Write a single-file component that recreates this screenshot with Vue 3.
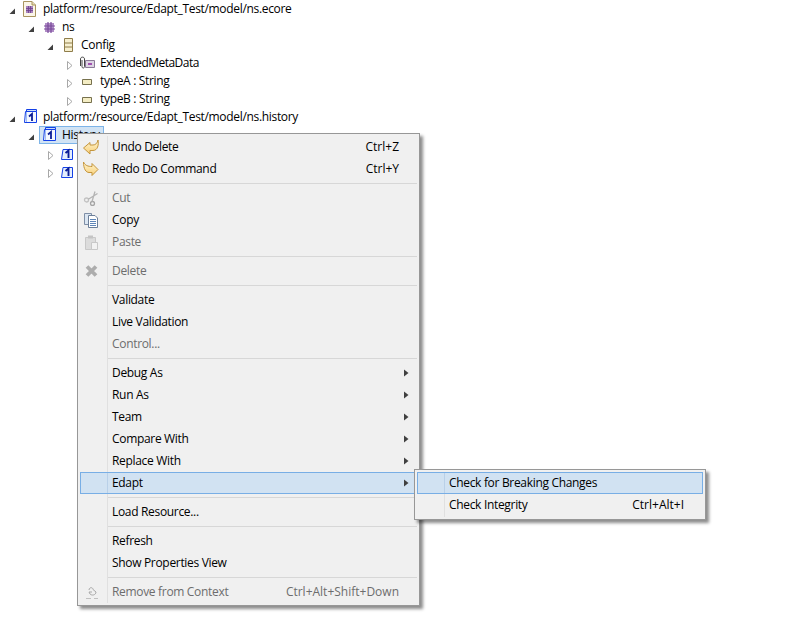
<script setup>
const tree = [
  { level: 0, open: true, icon: 'file', text: 'platform:/resource/Edapt_Test/model/ns.ecore' },
  { level: 1, open: true, icon: 'pkg', text: 'ns' },
  { level: 2, open: true, icon: 'cls', text: 'Config' },
  { level: 3, open: false, icon: 'anno', text: 'ExtendedMetaData', tight: true },
  { level: 3, open: false, icon: 'attr', text: 'typeA : String' },
  { level: 3, open: false, icon: 'attr', text: 'typeB : String' },
  { level: 0, open: true, icon: 'hist', text: 'platform:/resource/Edapt_Test/model/ns.history' },
  { level: 1, open: true, icon: 'hist', text: 'History', selected: true },
  { level: 2, open: false, icon: 'rel', text: '' },
  { level: 2, open: false, icon: 'rel', text: '' }
]
const menu = [
  [{ t: 'Undo Delete', k: 'Ctrl+Z', i: 'undo' }, { t: 'Redo Do Command', k: 'Ctrl+Y', i: 'redo' }],
  [{ t: 'Cut', d: 1, i: 'cut' }, { t: 'Copy', i: 'copy' }, { t: 'Paste', d: 1, i: 'paste' }],
  [{ t: 'Delete', d: 1, i: 'del' }],
  [{ t: 'Validate' }, { t: 'Live Validation' }, { t: 'Control...', d: 1 }],
  [{ t: 'Debug As', s: 1 }, { t: 'Run As', s: 1 }, { t: 'Team', s: 1 }, { t: 'Compare With', s: 1 }, { t: 'Replace With', s: 1 }, { t: 'Edapt', s: 1, h: 1 }],
  [{ t: 'Load Resource...' }],
  [{ t: 'Refresh' }, { t: 'Show Properties View' }],
  [{ t: 'Remove from Context', k: 'Ctrl+Alt+Shift+Down', d: 1, i: 'ctx' }]
]
</script>

<template>
  <div class="page">
    <div class="tree">
      <div v-for="(r, n) in tree" :key="n" class="row" :class="'lv' + r.level">
        <svg class="tw" width="9" height="9" viewBox="0 0 9 9">
          <path v-if="r.open" d="M7 1.5V7H1.5Z" fill="#404040" />
          <path v-else d="M2.5 .5L7 4.5L2.5 8.5Z" fill="#fff" stroke="#a8a8a8" />
        </svg>
        <div class="node" :class="{ sel: r.selected }">
          <svg class="ic" width="16" height="16" viewBox="0 0 16 16">
            <template v-if="r.icon === 'file'">
              <path d="M1.5 .5H10L13.5 4V15.5H1.5Z" fill="#fbf6e8" stroke="#a8945f" />
              <path d="M10 .5V4H13.5" fill="#e8dcb8" stroke="#a8945f" />
              <path d="M4 5H11V12H4Z" fill="#a884bd" />
              <path d="M4 7.5H11M4 9.5H11M6.5 5V12M8.5 5V12" stroke="#6c3f8a" stroke-width=".8" />
            </template>
            <template v-else-if="r.icon === 'pkg'">
              <path d="M4 4H13V13H4Z" fill="#b08cc6" />
              <path d="M3 7H14M3 10H14M7 3V14M10 3V14" stroke="#7a4c9c" stroke-width="1.2" />
            </template>
            <template v-else-if="r.icon === 'cls'">
              <path d="M4.5 1.5H12.5V14.5H4.5Z" fill="#f6efcf" stroke="#8f7d4a" />
              <path d="M4.5 6H12.5M4.5 10H12.5" stroke="#8f7d4a" />
            </template>
            <template v-else-if="r.icon === 'anno'">
              <path d="M6.5 5.5H15.5V12.5H6.5Z" fill="#dcd3e2" stroke="#8a7a96" />
              <path d="M9 9H13" stroke="#a050b0" stroke-width="2" />
              <path d="M1.5 11V4C1.5 1.5 5.5 1.5 5.5 4V11.5C5.5 13.5 3 13.5 3 11.5V5" fill="none" stroke="#444" />
            </template>
            <template v-else-if="r.icon === 'attr'">
              <path d="M3.5 6.5H12.5V11.5H3.5Z" fill="#f4edc4" stroke="#77714e" />
            </template>
            <template v-else-if="r.icon === 'hist'">
              <path d="M4.5 .5H14.5V2.5H4.5Z" fill="#c9dcfa" stroke="#1440e6" />
              <path d="M3.5 2.5H14.5V13.5H2.5Z" fill="#f4f8ff" stroke="#1440e6" />
              <path d="M4.5 3V13" stroke="#9fbdf5" />
              <path d="M7 7.5L10 5V12" fill="none" stroke="#0a1c96" stroke-width="1.8" />
            </template>
            <template v-else>
              <path d="M1.5 14.5L3 4.5H12.5V14.5Z" fill="#e4eefc" stroke="#1440e6" />
              <path d="M5.5 8L8.5 5.5V13" fill="none" stroke="#0a1c96" stroke-width="1.9" />
            </template>
          </svg>
          <span v-if="r.text" class="lbl" :class="{ tight: r.tight }">{{ r.text }}</span>
        </div>
      </div>
    </div>

    <div class="menu main">
      <div class="gutter"></div>
      <template v-for="(g, gi) in menu" :key="gi">
        <div v-if="gi" class="sep"></div>
        <div v-for="m in g" :key="m.t" class="item" :class="{ dis: m.d, hi: m.h }">
          <span class="mi">
            <svg v-if="m.i" width="16" height="16" viewBox="0 0 16 16">
              <template v-if="m.i === 'undo'">
                <defs>
                  <linearGradient id="goldU" x1="0" y1="0" x2="0" y2="1"><stop offset="0" stop-color="#fff6d2" /><stop offset="1" stop-color="#f8cf78" /></linearGradient>
                </defs>
                <path d="M.5 9L7 3.5V6H10C12.5 6 14.5 4 15 1C16 6 14.5 11.5 10 11.5H7V15Z" fill="url(#goldU)" stroke="#c4953c" />
              </template>
              <template v-else-if="m.i === 'redo'">
                <defs>
                  <linearGradient id="goldR" x1="0" y1="0" x2="0" y2="1"><stop offset="0" stop-color="#fff6d2" /><stop offset="1" stop-color="#f8cf78" /></linearGradient>
                </defs>
                <path d="M15 8.5L9 14.5V11.5H6C3 11.5 .5 8 .5 1C2 4.5 5 5.5 9 5.5V2.5Z" fill="url(#goldR)" stroke="#c4953c" />
              </template>
              <template v-else-if="m.i === 'cut'">
                <circle cx="3.5" cy="10" r="2" fill="none" stroke="#c2c2c2" stroke-width="1.3" />
                <circle cx="9.5" cy="13.5" r="2" fill="none" stroke="#a4a4a4" stroke-width="1.3" />
                <path d="M5.3 9.2L14.5 3.5M9 11.5L12 1.5" stroke="#b4b4b4" stroke-width="1.3" fill="none" />
              </template>
              <template v-else-if="m.i === 'copy'">
                <path d="M1.5 1.5H8.5V12.5H1.5Z" fill="#dbe6f2" stroke="#7f8fa6" />
                <path d="M5.5 3.5H12L14.5 6V15.5H5.5Z" fill="#fff" stroke="#6c7f99" />
                <path d="M7 7.5H13M7 9.5H13M7 11.5H13M7 13.5H13" stroke="#5f86b8" />
              </template>
              <template v-else-if="m.i === 'paste'">
                <path d="M2.5 3.5H12.5V15.5H2.5Z" fill="#dcdcdc" stroke="#c8c8c8" />
                <path d="M5 1.5H10V4.5H5Z" fill="#c4c4c4" />
                <path d="M8.5 8.5H14.5V15.5H8.5Z" fill="#f2f2f2" stroke="#c8c8c8" />
              </template>
              <template v-else-if="m.i === 'del'">
                <path d="M4 3.5L13 12.5M13 3.5L4 12.5" stroke="#adadad" stroke-width="3.8" />
              </template>
              <template v-else>
                <path d="M3 14.5H8M11 14.5H15" stroke="#c0c0c0" fill="none" />
                <path d="M6 6C6 3 10 3 10 5.5L13 8C13 11 9 12 7 10L6 8H9" fill="none" stroke="#a8a8a8" />
              </template>
            </svg>
          </span>
          <span class="mt">{{ m.t }}</span>
          <span v-if="m.k" class="mk">{{ m.k }}</span>
          <svg v-if="m.s" class="sub" width="5" height="8" viewBox="0 0 5 8"><path d="M0 .5L4.5 4L0 7.5Z" fill="#404040" /></svg>
        </div>
      </template>
    </div>

    <div class="menu submenu">
      <div class="gutter"></div>
      <div class="item hi"><span class="mi"></span><span class="mt">Check for Breaking Changes</span></div>
      <div class="item"><span class="mi"></span><span class="mt">Check Integrity</span><span class="mk">Ctrl+Alt+I</span></div>
    </div>
  </div>
</template>

<style scoped>
.page {
  position: relative;
  width: 810px;
  height: 638px;
  overflow: hidden;
  background: #fff;
  color: #000;
  font: 12px/18px "Open Sans", "Noto Sans", sans-serif;
  letter-spacing: -.32px;
}
.tree { display: flex; flex-direction: column; }
.row { display: flex; align-items: center; height: 18px; }
.lv0 { padding-left: 8px; }
.lv1 { padding-left: 27px; }
.lv2 { padding-left: 46px; }
.lv3 { padding-left: 65px; }
.tw { flex: none; margin: 4px 3px 0 0; }
.node { display: flex; align-items: center; height: 18px; padding: 0 1px; border: 1px solid transparent; box-sizing: border-box; gap: 5px; }
.sel { background: #d1e3f4; border-color: #7db4e8; width: 65px; }
.ic { flex: none; }
.lbl { white-space: nowrap; }
.tight { letter-spacing: -.55px; }

.menu {
  position: absolute;
  box-sizing: border-box;
  background: #f0f0f0;
  border: 1px solid #979797;
  padding: 2px;
  box-shadow: 3px 3px 3px rgba(0, 0, 0, .45);
}
.main { left: 77px; top: 133px; width: 343px; height: 473px; }
.submenu { left: 414px; top: 469px; width: 292px; height: 51px; }
.gutter { position: absolute; left: 29px; top: 2px; bottom: 2px; width: 1px; background: #e0e0e0; }
.item {
  position: relative;
  display: flex;
  align-items: center;
  height: 22px;
  box-sizing: border-box;
  border: 1px solid transparent;
}
.hi { background: #d1e2f2; border-color: #78aee5; }
.hi::before { content: ""; position: absolute; left: 26px; top: 0; bottom: 0; width: 1px; background: #b9d0e8; }
.mi { width: 31px; flex: none; display: flex; align-items: center; justify-content: center; padding-right: 11px; box-sizing: border-box; }
.mt { flex: 1; white-space: nowrap; }
.mk { margin-right: 17px; white-space: nowrap; letter-spacing: 0; }
.submenu .mk { margin-right: 18px; }
.sub { position: absolute; right: 7px; top: 6px; }
.dis { color: #6d6d6d; }
.sep { height: 1px; margin: 3px 0 3px 27px; background: #d7d7d7; }
</style>
<style>
html, body { margin: 0; background: #fff; }
</style>
